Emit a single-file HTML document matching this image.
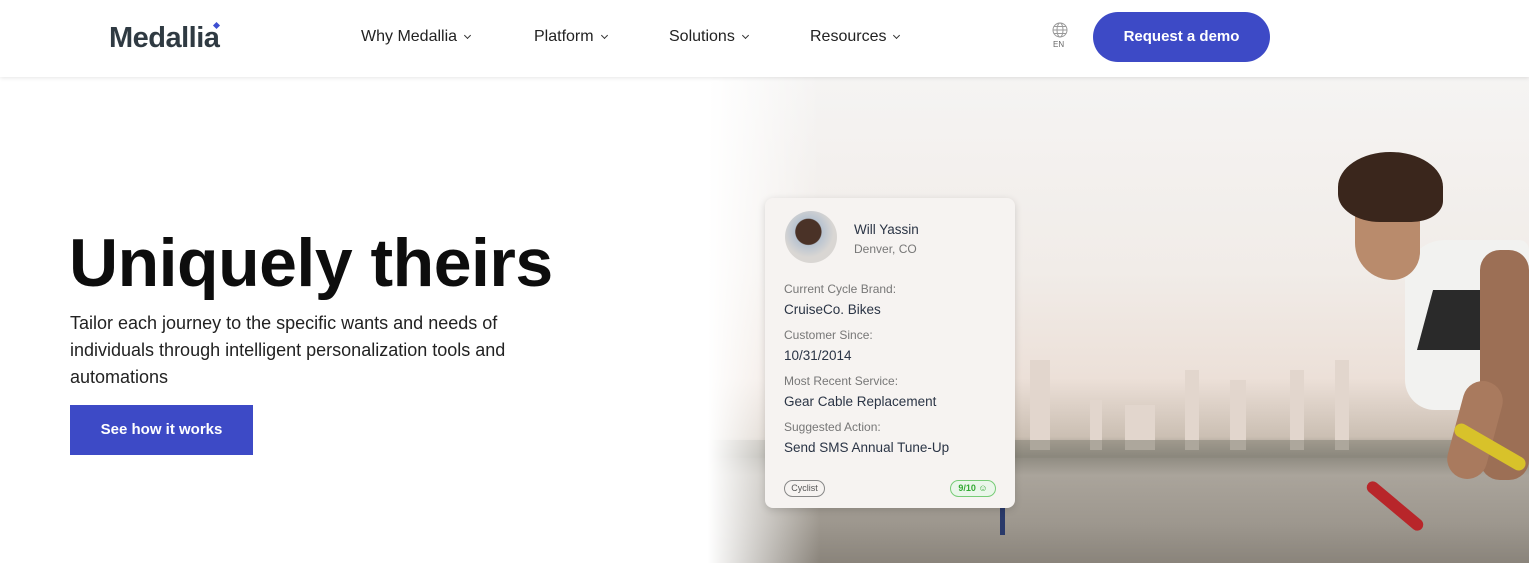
<!DOCTYPE html>
<html><head><meta charset="utf-8"><style>
*{margin:0;padding:0;box-sizing:border-box}
body{width:1529px;height:563px;overflow:hidden;background:#fff;font-family:"Liberation Sans",sans-serif;position:relative}
.hdr{position:absolute;left:0;top:0;width:1529px;height:77px;background:#fff;box-shadow:0 1px 4px rgba(0,0,0,.1);z-index:5}
.logo{position:absolute;left:109px;top:22px;font-size:29px;font-weight:bold;color:#2f3a42;letter-spacing:-.5px}
.logo i{position:absolute;left:105px;top:1px;width:5px;height:5px;background:#3d4ed1;transform:rotate(45deg)}
.nav{position:absolute;top:28px;font-size:16px;color:#222}
.nav:after{content:"";display:inline-block;width:4px;height:4px;border-right:1.3px solid #333;border-bottom:1.3px solid #333;transform:rotate(45deg);margin-left:8px;position:relative;top:-3px}
.btn{position:absolute;left:1093px;top:12px;width:177px;height:50px;border-radius:25px;background:#3d4ac6;color:#fff;font-weight:bold;font-size:15px;text-align:center;line-height:50px}
.photo{position:absolute;left:680px;top:77px;width:849px;height:486px;background:
linear-gradient(180deg,#f5f4f3 0%,#f1ece8 40%,#ece0d8 62%,#cbbfb3 74%,#8e8a80 78%,#aaa49b 82%,#9d978e 92%,#8a847b 100%)}
.fade{position:absolute;left:680px;top:77px;width:140px;height:486px;background:linear-gradient(90deg,#fff 0%,#fff 20%,rgba(255,255,255,0) 100%)}
h1{position:absolute;left:69px;top:224px;font-size:68px;font-weight:bold;color:#0d0d0d;letter-spacing:-.5px}
.p{position:absolute;left:70px;top:310px;width:500px;font-size:18px;line-height:27px;color:#222}
.cta{position:absolute;left:70px;top:405px;width:183px;height:50px;background:#3d4ac6;color:#fff;font-weight:bold;font-size:15px;text-align:center;line-height:50px}
.card{position:absolute;left:765px;top:198px;width:250px;height:310px;background:#f6f3f1;border-radius:8px;box-shadow:0 2px 8px rgba(0,0,0,.15);font-size:13px;color:#333}
.card .av{position:absolute;left:20px;top:13px;width:52px;height:52px;border-radius:50%;background:radial-gradient(circle at 45% 40%,#4a3227 0 30%,#b8c3d0 32%,#d9d6d3 60%)}
.card .l{position:absolute;left:19px;font-size:12px;color:#777}
.card .v{position:absolute;left:19px;font-size:13.5px;color:#2a3445}
.tag{position:absolute;top:282px;height:17px;border-radius:9px;font-size:9px;line-height:15px;text-align:center}
.m{position:absolute}
.b{position:absolute;background:#e2d6cd}
</style></head><body>
<div class="photo"></div>
<div class="b" style="left:1005px;top:330px;width:10px;height:120px"></div>
<div class="b" style="left:1030px;top:360px;width:20px;height:90px"></div>
<div class="b" style="left:1090px;top:400px;width:12px;height:50px"></div>
<div class="b" style="left:1125px;top:405px;width:30px;height:45px"></div>
<div class="b" style="left:1185px;top:370px;width:14px;height:80px"></div>
<div class="b" style="left:1230px;top:380px;width:16px;height:70px"></div>
<div class="b" style="left:1290px;top:370px;width:14px;height:80px"></div>
<div class="b" style="left:1335px;top:360px;width:14px;height:90px"></div>
<div class="m" style="left:680px;top:440px;width:849px;height:18px;background:#8b877b;opacity:.6"></div>
<div style="position:absolute;left:1000px;top:505px;width:5px;height:30px;background:#2a3a6a"></div>
<div class="fade"></div>
<!-- man -->
<div class="m" style="left:1405px;top:240px;width:124px;height:170px;background:#f2f2f0;border-radius:40px 10px 0 30px"></div>
<div class="m" style="left:1425px;top:290px;width:70px;height:60px;background:#2a2a2a;transform:skew(-15deg)"></div>
<div class="m" style="left:1355px;top:185px;width:65px;height:95px;background:#b98b6c;border-radius:30px 30px 30px 40px"></div>
<div class="m" style="left:1338px;top:152px;width:105px;height:70px;background:#3a261c;border-radius:50% 50% 30% 40%"></div>
<div class="m" style="left:1480px;top:250px;width:49px;height:230px;background:#9c6f55;border-radius:20px"></div>
<div class="m" style="left:1455px;top:380px;width:40px;height:100px;background:#a97a5e;border-radius:20px;transform:rotate(15deg)"></div>
<div class="m" style="left:1450px;top:440px;width:80px;height:14px;background:#d8c22a;border-radius:7px;transform:rotate(30deg)"></div>
<div class="m" style="left:1360px;top:500px;width:70px;height:12px;background:#b8262a;border-radius:6px;transform:rotate(40deg)"></div>
<div class="hdr">
<div class="logo">Medallia<i></i></div>
<div class="nav" style="left:361px">Why Medallia</div>
<div class="nav" style="left:534px">Platform</div>
<div class="nav" style="left:669px">Solutions</div>
<div class="nav" style="left:810px">Resources</div>
<svg style="position:absolute;left:1052px;top:22px" width="16" height="16" viewBox="0 0 16 16" fill="none" stroke="#999" stroke-width="1"><circle cx="8" cy="8" r="7"/><ellipse cx="8" cy="8" rx="3" ry="7"/><path d="M1 8h14M2 4.5h12M2 11.5h12"/></svg>
<div style="position:absolute;left:1053px;top:40px;font-size:8px;color:#666">EN</div>
<div class="btn">Request a demo</div>
</div>
<h1>Uniquely theirs</h1>
<div class="p">Tailor each journey to the specific wants and needs of individuals through intelligent personalization tools and automations</div>
<div class="cta">See how it works</div>
<div class="card">
<div class="av"></div>
<div style="position:absolute;left:89px;top:24px;font-size:13.5px;color:#2a3445">Will Yassin</div>
<div style="position:absolute;left:89px;top:44px;font-size:12px;color:#777">Denver, CO</div>
<div class="l" style="top:84px">Current Cycle Brand:</div><div class="v" style="top:104px">CruiseCo. Bikes</div>
<div class="l" style="top:130px">Customer Since:</div><div class="v" style="top:150px">10/31/2014</div>
<div class="l" style="top:176px">Most Recent Service:</div><div class="v" style="top:196px">Gear Cable Replacement</div>
<div class="l" style="top:222px">Suggested Action:</div><div class="v" style="top:242px">Send SMS Annual Tune-Up</div>
<div class="tag" style="left:19px;width:41px;border:1px solid #888;color:#555">Cyclist</div>
<div class="tag" style="left:185px;width:46px;border:1px solid #7c7;color:#3a3;background:#eaf6ea;font-weight:bold">9/10 ☺</div>
</div>
</body></html>
